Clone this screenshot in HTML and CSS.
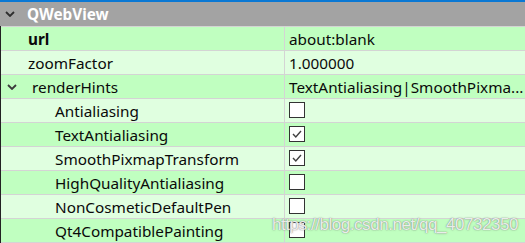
FILE: index.html
```html
<!DOCTYPE html>
<html>
<head>
<meta charset="utf-8">
<link rel="stylesheet" href="styles.css">
</head>
<body>
<div class="panel">
  <div class="topbar"></div>
  <div class="header">
    <svg class="chev" width="10" height="6" viewBox="0 0 10 6"><polyline points="1,1 5,5 9,1" fill="none" stroke="#2e2e2e" stroke-width="1.8"/></svg>
    <span class="htext">QWebView</span>
  </div>
  <div class="rows">
    <div class="row dark">
      <div class="name lvl1 bold">url</div>
      <div class="val">about:blank</div>
    </div>
    <div class="row light">
      <div class="name lvl1">zoomFactor</div>
      <div class="val">1.000000</div>
    </div>
    <div class="row dark">
      <div class="name lvl1x">
        <svg class="chev2" width="10" height="6" viewBox="0 0 10 6"><polyline points="1,1 5,5 9,1" fill="none" stroke="#3a3a3a" stroke-width="1.8"/></svg>
        <span>renderHints</span>
      </div>
      <div class="val">TextAntialiasing|SmoothPixma...</div>
    </div>
    <div class="row light">
      <div class="name lvl2">Antialiasing</div>
      <div class="val"><span class="box"></span></div>
    </div>
    <div class="row dark">
      <div class="name lvl2">TextAntialiasing</div>
      <div class="val"><span class="box"><svg width="14" height="14" viewBox="0 0 14 14"><polyline points="3,7 5.8,10 11,4" fill="none" stroke="#404040" stroke-width="1.4"/></svg></span></div>
    </div>
    <div class="row light">
      <div class="name lvl2">SmoothPixmapTransform</div>
      <div class="val"><span class="box"><svg width="14" height="14" viewBox="0 0 14 14"><polyline points="3,7 5.8,10 11,4" fill="none" stroke="#404040" stroke-width="1.4"/></svg></span></div>
    </div>
    <div class="row dark">
      <div class="name lvl2">HighQualityAntialiasing</div>
      <div class="val"><span class="box"></span></div>
    </div>
    <div class="row light">
      <div class="name lvl2">NonCosmeticDefaultPen</div>
      <div class="val"><span class="box"></span></div>
    </div>
    <div class="row dark">
      <div class="name lvl2">Qt4CompatiblePainting</div>
      <div class="val"><span class="box"></span></div>
    </div>
  </div>
  <div class="watermark">https://blog.csdn.net/qq_40732350</div>
</div>
</body>
</html>
```
FILE: styles.css
```css
html, body {
  margin: 0;
  padding: 0;
  background: #e0ffe0;
}
.panel {
  position: relative;
  width: 525px;
  height: 243px;
  overflow: hidden;
  font-family: "Noto Sans", "Open Sans", sans-serif;
  font-size: 15.3px;
  color: #0a0a0a;
}
.topbar {
  height: 2px;
  background: #0a78d4;
}
.header {
  height: 24px;
  background: #a3a3a3;
  display: flex;
  align-items: center;
}
.chev {
  margin-left: 5px;
  margin-right: 12px;
}
.htext {
  color: #ffffff;
  font-weight: bold;
  font-size: 15.3px;
}
.rows {
  border-left: 1px solid #222;
}
.row {
  display: grid;
  grid-template-columns: 283px 1fr;
  height: 23px;
  border-top: 1px solid #d4d4d4;
}
.row:last-child {
  border-bottom: 1px solid #d4d4d4;
}
.row.dark { background: #c0ffc0; }
.row.light { background: #e0ffe0; }
.name {
  display: flex;
  align-items: center;
  white-space: nowrap;
}
.lvl1 { padding-left: 27px; }
.lvl1x { padding-left: 0; }
.lvl2 { padding-left: 54px; }
.bold { font-weight: bold; }
.chev2 {
  margin-left: 6px;
  margin-right: 15px;
}
.val {
  border-left: 1px solid #d4d4d4;
  display: flex;
  align-items: center;
  padding-left: 4px;
  white-space: nowrap;
  overflow: hidden;
}
.box {
  display: inline-flex;
  align-items: center;
  justify-content: center;
  width: 14px;
  height: 14px;
  border: 1px solid #333;
  background: #fff;
  margin-top: -2px;
}
.watermark {
  position: absolute;
  left: 272px;
  top: 215px;
  font-family: "Liberation Sans", Arial, sans-serif;
  font-size: 17px;
  letter-spacing: -0.45px;
  color: rgba(255,255,255,0.85);
  text-shadow: 0 0 1px rgba(90,90,90,0.7), 0 0 2px rgba(120,120,120,0.5);
}
```
